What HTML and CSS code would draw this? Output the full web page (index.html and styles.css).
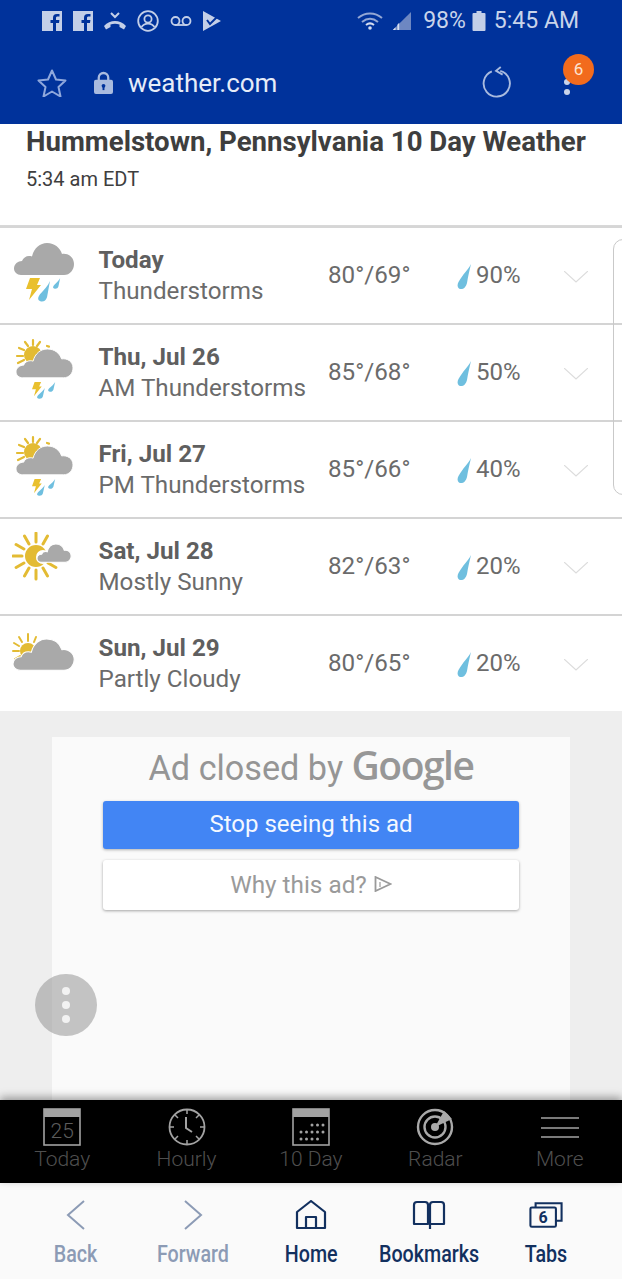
FILE: index.html
```html
<!DOCTYPE html>
<html lang="en">
<head>
<meta charset="utf-8">
<title>Hummelstown 10 Day Weather</title>
<link rel="stylesheet" href="styles.css">
</head>
<body>
<svg class="defs" width="0" height="0" aria-hidden="true">
  <defs>
    <path id="cloud" d="M7 32C3 32 0 29 0 25.500 0 21 4 18 8 18c1-3 4-5 7-5 1 0 2 0 3 .5C20 5 26 0 33 0c8 0 13 5 15 11 6-1 12 3 12 10 0 6-4 11-10 11z"/>
    <path id="bolt" d="M4 0h10l-3 7h4L3 22l3-11H0z"/>
    <path id="drop" d="M12 0C10 5 6 9 2 14-1 18 0 21 3 21.500 6 22 8 20 9 17 10 12 11 5 12 0z"/>
    <symbol id="i-storm" viewBox="0 0 64 66"><use href="#cloud" fill="#a9a9a9" x="2" y="2"/><use href="#bolt" fill="#e9c02e" x="14" y="37"/><use href="#drop" fill="#6fbfdf" transform="translate(26 40) scale(1 .95)"/><use href="#drop" fill="#6fbfdf" transform="translate(41 37) scale(.6 .5)"/></symbol>
    <symbol id="i-sunstorm" viewBox="0 0 64 66"><g stroke="#e3bb33" stroke-width="2.200" stroke-linecap="round"><path d="M21 2v5M13 4l3 4M28 4l-3 4M7 10l5 2M5 18h6M6 25l6-3M35 8l2 .6"/></g><circle cx="21" cy="17" r="9" fill="#e3bb33"/><use href="#cloud" fill="#a9a9a9" stroke="#fff" stroke-width="1" transform="translate(4 11) scale(.95 .9)"/><use href="#bolt" fill="#e9c02e" transform="translate(20 44) scale(.65)"/><use href="#drop" fill="#6fbfdf" transform="translate(25 50) scale(.65 .5)"/><use href="#drop" fill="#6fbfdf" transform="translate(36 44) scale(.6 .45)"/></symbol>
    <symbol id="i-sunny" viewBox="0 0 64 66"><g transform="translate(0 -1)"><g stroke="#e3bb33" stroke-width="3" stroke-linecap="round"><path d="M24 11V2M31 12.900l4.500-7.800M17 12.900l-4.500-7.800M11.900 18l-7.800-4.500M10 25H1M11.900 32l-7.800 4.500M17 37.100l-4.500 7.800M24 39v9M31 37.100l4.500 7.800M36.100 32l7.800 4.500"/></g><circle cx="24" cy="25" r="11" fill="#e3bb33"/><circle cx="31" cy="26" r="7" fill="#fff"/><use href="#cloud" fill="#a9a9a9" stroke="#fff" stroke-width="2" transform="translate(25 13) scale(.57)"/></g></symbol>
    <symbol id="i-partly" viewBox="0 0 64 66"><g transform="translate(0 -1)"><g stroke="#e3bb33" stroke-width="2" stroke-linecap="round"><path d="M16 6v7M7 9l3 5M24 9l-2 5M2 15l5 3M1 23h6M3 31l5-3"/></g><circle cx="16" cy="23" r="8" fill="#e3bb33"/><use href="#cloud" fill="#a9a9a9" stroke="#fff" stroke-width="1" transform="translate(1 11) scale(1.020 .98)"/></g></symbol>
    <symbol id="i-calendar" viewBox="0 0 38 38"><rect x="1" y="1" width="36" height="36" fill="none" stroke="#a2a2a2" stroke-width="1.600"/><rect x="1" y="1" width="36" height="8" fill="#a2a2a2"/></symbol>
    <symbol id="i-drop" viewBox="0 0 14 26"><path d="M14 0C11 6 6 10 1.500 18-1 23 2 25.500 5 25 8 24.500 9.500 21 10 19 11 13 12.500 6 14 0z" fill="#6fbfdf"/></symbol>
  </defs>
</svg>
<div class="phone">
  <header class="appbar">
    <div class="status">
      <div class="status-icons">
        <svg class="si" viewBox="0 0 20 20"><path fill="#c3cfe8" d="M0 0h20v20h-6v-8h3l.4-3H14V7c0-1 .5-1.500 1.700-1.500H17.500V3h-2.500C12 3 11 4.500 11 7v2H8.500v3H11v8H0z"/></svg>
        <svg class="si" viewBox="0 0 20 20"><path fill="#c3cfe8" d="M0 0h20v20h-6v-8h3l.4-3H14V7c0-1 .5-1.500 1.700-1.500H17.500V3h-2.500C12 3 11 4.500 11 7v2H8.500v3H11v8H0z"/></svg>
        <svg class="si call" viewBox="0 0 22 20"><path fill="none" stroke="#c3cfe8" stroke-width="2" d="M7 2l4 4 4-4"/><path fill="#c3cfe8" d="M0 15c3-3.500 7-5 11-5s8 1.500 11 5l-2 3.500-4.500-2.500v-2.500c-3-1-6-1-9 0V16L2 18.500z"/></svg>
        <svg class="si acct" viewBox="0 0 22 22"><g fill="none" stroke="#c3cfe8" stroke-width="1.800"><circle cx="11" cy="11" r="9.800"/><circle cx="11" cy="9" r="3.600"/><path d="M4.500 17c2-3 4-3.400 6.500-3.400s4.500.4 6.500 3.400"/></g></svg>
        <svg class="si vm" viewBox="0 0 22 12"><g fill="none" stroke="#c3cfe8" stroke-width="1.800"><circle cx="5.500" cy="6" r="4"/><circle cx="16.500" cy="6" r="4"/><path d="M5.500 10h11"/></g></svg>
        <svg class="si play" viewBox="0 0 18 20"><path fill="#c3cfe8" d="M0 0l18 10L0 20z"/><path fill="none" stroke="#00329b" stroke-width="2" d="M4 9l3 4 8-8"/></svg>
      </div>
      <div class="status-right">
        <svg class="wifi" viewBox="0 0 26 18"><g fill="none" stroke="#93a7d4" stroke-width="2"><path d="M1 6c7-6 17-6 24 0"/><path d="M5 10c5-4 11-4 16 0"/></g><path fill="none" stroke="#d5ddf0" stroke-width="2" d="M9 13c2.500-2 5.500-2 8 0"/><circle cx="13" cy="16" r="1.800" fill="#d5ddf0"/></svg>
        <svg class="signal" viewBox="0 0 22 20"><path fill="#6d87c2" d="M22 0v20H2z"/><path fill="#d5ddf0" d="M2 20l3-3v3zM7 20v-6l2-2v8z"/></svg>
        <span class="status-text pct">98%</span>
        <svg class="battery" viewBox="0 0 13 20"><path fill="#c3cfe8" d="M4 0h5v2h3a1 1 0 0 1 1 1v16a1 1 0 0 1-1 1H1a1 1 0 0 1-1-1V3a1 1 0 0 1 1-1h3z"/></svg>
        <span class="status-text">5:45 AM</span>
      </div>
    </div>
    <div class="toolbar">
      <svg class="star" viewBox="0 0 30 28"><path fill="none" stroke="#8fa8dc" stroke-width="2" stroke-linejoin="round" d="M15 1.500l4 9 9.500 1-7 6.500 2 9.500-8.500-5-8.500 5 2-9.500-7-6.500 9.500-1z"/></svg>
      <svg class="lock" viewBox="0 0 20 24"><path fill="none" stroke="#a9bbdf" stroke-width="2.400" d="M5 11V7a5 5 0 0 1 10 0v4"/><rect y="9" width="20" height="15" rx="2" fill="#a9bbdf"/><circle cx="10" cy="15.500" r="2" fill="#00329b"/><rect x="9" y="16" width="2" height="4" fill="#00329b"/></svg>
      <span class="url">weather.com</span>
      <svg class="reload" viewBox="0 0 32 32"><path fill="none" stroke="#a9bbdf" stroke-width="2" d="M10.500 3.500A14 14 0 1 0 19.500 3"/><path fill="none" stroke="#a9bbdf" stroke-width="2" d="M20 -1l-5 4 7 4"/></svg>
      <div class="menu-dots"><i></i><i></i></div>
      <span class="badge">6</span>
    </div>
  </header>

  <section class="heading">
    <h1>Hummelstown, Pennsylvania 10 Day Weather</h1>
    <p>5:34 am EDT</p>
  </section>

  <main class="forecast">
    <div class="day">
      <svg class="wx"><use href="#i-storm"/></svg>
      <div class="desc"><b>Today</b><span>Thunderstorms</span></div>
      <div class="temp">80°/69°</div>
      <div class="rain"><svg class="raindrop"><use href="#i-drop"/></svg>90%</div>
      <svg class="chev" viewBox="0 0 24 12"><path fill="none" stroke="#dcdcdc" stroke-width="1.200" d="M0 0l12 11L24 0"/></svg>
    </div>
    <div class="day">
      <svg class="wx"><use href="#i-sunstorm"/></svg>
      <div class="desc"><b>Thu, Jul 26</b><span>AM Thunderstorms</span></div>
      <div class="temp">85°/68°</div>
      <div class="rain"><svg class="raindrop"><use href="#i-drop"/></svg>50%</div>
      <svg class="chev" viewBox="0 0 24 12"><path fill="none" stroke="#dcdcdc" stroke-width="1.200" d="M0 0l12 11L24 0"/></svg>
    </div>
    <div class="day">
      <svg class="wx"><use href="#i-sunstorm"/></svg>
      <div class="desc"><b>Fri, Jul 27</b><span>PM Thunderstorms</span></div>
      <div class="temp">85°/66°</div>
      <div class="rain"><svg class="raindrop"><use href="#i-drop"/></svg>40%</div>
      <svg class="chev" viewBox="0 0 24 12"><path fill="none" stroke="#dcdcdc" stroke-width="1.200" d="M0 0l12 11L24 0"/></svg>
    </div>
    <div class="day">
      <svg class="wx"><use href="#i-sunny"/></svg>
      <div class="desc"><b>Sat, Jul 28</b><span>Mostly Sunny</span></div>
      <div class="temp">82°/63°</div>
      <div class="rain"><svg class="raindrop"><use href="#i-drop"/></svg>20%</div>
      <svg class="chev" viewBox="0 0 24 12"><path fill="none" stroke="#dcdcdc" stroke-width="1.200" d="M0 0l12 11L24 0"/></svg>
    </div>
    <div class="day last">
      <svg class="wx"><use href="#i-partly"/></svg>
      <div class="desc"><b>Sun, Jul 29</b><span>Partly Cloudy</span></div>
      <div class="temp">80°/65°</div>
      <div class="rain"><svg class="raindrop"><use href="#i-drop"/></svg>20%</div>
      <svg class="chev" viewBox="0 0 24 12"><path fill="none" stroke="#dcdcdc" stroke-width="1.200" d="M0 0l12 11L24 0"/></svg>
    </div>
    <div class="side-panel"></div>
  </main>

  <section class="ad-area">
    <div class="ad-card">
      <div class="ad-title">Ad closed by <span class="google">Google</span></div>
      <div class="ad-btn primary">Stop seeing this ad</div>
      <div class="ad-btn secondary">Why this ad?
        <svg class="adchoice" viewBox="0 0 18 16"><path fill="none" stroke="#9a9a9a" stroke-width="1.800" d="M1.500 1l15 7-15 7z"/><path stroke="#9a9a9a" stroke-width="1.200" d="M6 6v5"/></svg>
      </div>
    </div>
    <div class="fab"><i></i><i></i><i></i></div>
  </section>

  <nav class="tabs">
    <div class="tab">
      <div class="tab-icon"><svg class="ti"><use href="#i-calendar"/></svg><span class="cal-num">25</span></div>
      <span>Today</span>
    </div>
    <div class="tab">
      <div class="tab-icon"><svg class="ti" viewBox="0 0 38 38"><g fill="none" stroke="#a2a2a2"><circle cx="19" cy="19" r="17.500" stroke-width="1.800"/><path stroke-width="1.500" d="M19 2v4M19 32v4M2 19h4M32 19h4M7 7l3 3M28 28l3 3M31 7l-3 3M10 28l-3 3"/><path stroke-width="2" d="M18 9v11l6 4"/></g></svg></div>
      <span>Hourly</span>
    </div>
    <div class="tab">
      <div class="tab-icon"><svg class="ti" viewBox="0 0 38 38"><use href="#i-calendar" width="38" height="38"/><g fill="#a2a2a2"><circle cx="20" cy="17" r="1.500"/><circle cx="25.500" cy="17" r="1.500"/><circle cx="31" cy="17" r="1.500"/><circle cx="9" cy="24" r="1.500"/><circle cx="14.500" cy="24" r="1.500"/><circle cx="20" cy="24" r="1.500"/><circle cx="25.500" cy="24" r="1.500"/><circle cx="31" cy="24" r="1.500"/><circle cx="9" cy="31" r="1.500"/><circle cx="14.500" cy="31" r="1.500"/><circle cx="20" cy="31" r="1.500"/><circle cx="25.500" cy="31" r="1.500"/></g></svg></div>
      <span>10 Day</span>
    </div>
    <div class="tab">
      <div class="tab-icon"><svg class="ti" viewBox="0 0 38 38"><g fill="none" stroke="#a9a9a9"><circle cx="19" cy="19" r="17" stroke-width="2.400"/><circle cx="19" cy="19" r="10.500" stroke-width="2.400"/></g><circle cx="19" cy="19" r="4" fill="#a9a9a9"/><path d="M19 19L28 3l8 8z" fill="#a9a9a9"/></svg></div>
      <span>Radar</span>
    </div>
    <div class="tab">
      <div class="tab-icon"><svg class="ti" viewBox="0 0 38 38"><path stroke="#a2a2a2" stroke-width="1.600" d="M0 10h38M0 20h38M0 29h38"/></svg></div>
      <span>More</span>
    </div>
  </nav>

  <nav class="browser-nav">
    <div class="nav-item off">
      <svg class="ni" viewBox="0 0 34 30"><path fill="none" stroke="#8c9bb5" stroke-width="2" d="M25 1L9 15l16 14"/></svg>
      <span>Back</span>
    </div>
    <div class="nav-item off">
      <svg class="ni" viewBox="0 0 34 30"><path fill="none" stroke="#8c9bb5" stroke-width="2" d="M9 1l16 14L9 29"/></svg>
      <span>Forward</span>
    </div>
    <div class="nav-item">
      <svg class="ni" viewBox="0 0 34 30"><path fill="none" stroke="#12305f" stroke-width="2.200" stroke-linejoin="round" d="M3 28V12L17 1l14 11v16zM12 28V17h10v11"/></svg>
      <span>Home</span>
    </div>
    <div class="nav-item">
      <svg class="ni" viewBox="0 0 34 30"><path fill="none" stroke="#12305f" stroke-width="2.200" stroke-linejoin="round" d="M16 24H2V5a3 3 0 0 1 3-3h8a3 3 0 0 1 3 3zM18 29V5a3 3 0 0 1 3-3h8a3 3 0 0 1 3 3v19H18"/></svg>
      <span>Bookmarks</span>
    </div>
    <div class="nav-item">
      <svg class="ni" viewBox="0 0 36 30"><g fill="none" stroke="#12305f" stroke-width="2.200"><rect x="1.500" y="7" width="27" height="20.500" rx="1.500"/><path d="M7 7V2.500h27.500V21H28.500"/></g><text x="15" y="24" class="tabcount">6</text></svg>
      <span>Tabs</span>
    </div>
  </nav>
</div>
</body>
</html>
```

FILE: styles.css
```css
* { box-sizing: border-box; }
html, body { margin: 0; padding: 0; }
body { font-family: Roboto, "Liberation Sans", sans-serif; background: #fff; }
.defs { position: absolute; }

.phone {
  width: 622px;
  height: 1279px;
  display: flex;
  flex-direction: column;
  overflow: hidden;
  position: relative;
}

/* header */
.appbar { background: #00329b; height: 124px; flex: none; }
.status { height: 41px; display: flex; justify-content: space-between; align-items: center; padding: 0 43px 0 42px; }
.status-icons { display: flex; align-items: center; gap: 11px; }
.si { width: 20px; height: 20px; display: block; }
.si.call { width: 22px; }
.si.acct { width: 22px; height: 22px; }
.si.vm { width: 22px; height: 12px; }
.si.play { width: 18px; }
.status-right { display: flex; align-items: center; }
.wifi { width: 26px; height: 18px; margin-right: 8px; }
.signal { width: 20px; height: 20px; margin-right: 12px; }
.status-text { font-size: 23px; color: #c9d4ea; line-height: 1; }
.pct { margin-right: 6px; }
.battery { width: 14px; height: 20px; margin-right: 8px; }

.toolbar { position: relative; height: 83px; display: flex; align-items: center; padding: 0 0 0 37px; }
.star { width: 30px; height: 28px; margin-right: 27px; }
.lock { width: 19px; height: 23px; margin-right: 15px; }
.url { font-size: 26px; color: #e6ecf8; }
.reload { width: 30px; height: 30px; margin-left: 205px; overflow: visible; }
.menu-dots { display: flex; flex-direction: column; gap: 4px; margin-left: 52px; margin-top: 8px; }
.menu-dots i { display: block; width: 6px; height: 6px; border-radius: 50%; background: #c9d4ea; }
.badge {
  position: absolute; left: 563px; top: 13px;
  width: 31px; height: 31px; border-radius: 50%;
  background: #f26b1d; color: #fde3d2;
  font-size: 17px; line-height: 31px; text-align: center;
}

/* heading */
.heading { height: 102px; flex: none; padding: 0 0 0 26px; border-bottom: 1px solid #d8d8d8; }
.heading h1 { margin: 0; padding-top: 1px; font-size: 27.6px; line-height: 34px; font-weight: 700; color: #3e3e3e; white-space: nowrap; }
.heading p { margin: 7px 0 0; font-size: 20px; line-height: 26px; color: #3e3e3e; }

/* forecast */
.forecast { flex: none; position: relative; border-top: 2px solid #d6d6d6; background: #fff; }
.day {
  height: 97px;
  display: grid;
  grid-template-columns: 12px 87px 229px 129px 1fr 24px 34px;
  align-items: center;
  border-bottom: 2px solid #d4d4d4;
  color: #666;
}
.day.last { border-bottom: 0; height: 95px; }
.wx { grid-column: 2; width: 64px; height: 66px; align-self: start; margin-top: 13px; }
.desc { grid-column: 3; display: flex; flex-direction: column; margin-left: -.5px; margin-top: 1px; }
.desc b { font-size: 24.2px; line-height: 31px; font-weight: 700; color: #5f5f5f; }
.desc span { font-size: 24.2px; line-height: 31px; color: #6b6b6b; white-space: nowrap; }
.temp { grid-column: 4; font-size: 24.2px; color: #6b6b6b; margin-top: -2px; }
.rain { grid-column: 5; display: flex; align-items: center; gap: 5px; font-size: 24px; color: #6b6b6b; margin-top: -2px; }
.raindrop { width: 14px; height: 26px; margin-top: 4px; }
.chev { grid-column: 6; width: 24px; height: 12px; margin-top: 3px; }
.side-panel {
  position: absolute; left: 613px; top: 11px;
  width: 20px; height: 256px;
  border: 1.500px solid #c9c9c9; border-radius: 10px;
}

/* ad */
.ad-area { flex: 1; background: #eeeeee; padding: 26px 52px 0; position: relative; min-height: 0; }
.ad-card { background: #fafafa; height: 100%; display: flex; flex-direction: column; align-items: center; padding: 0 51px; }
.ad-title { flex: none; height: 62px; font-size: 34.2px; line-height: 62px; color: #959595; white-space: nowrap; }
.google { font-family: "Open Sans", sans-serif; font-size: 39px; line-height: 0; font-weight: 600; letter-spacing: -1.500px; color: #979797; }
.ad-btn { width: 100%; flex: none; display: flex; align-items: center; justify-content: center; border-radius: 3px; }
.primary { margin-top: 2px; height: 48px; background: #4285f4; color: #f4f8ff; font-size: 24px; padding-bottom: 2px; box-shadow: 0 1px 3px rgba(0,0,0,.3); }
.secondary { margin-top: 11px; height: 50px; background: #fff; color: #9a9a9a; font-size: 24.3px; gap: 7px; padding-bottom: 2px; box-shadow: 0 1px 3px rgba(0,0,0,.35); }
.adchoice { width: 18px; height: 16px; }
.fab {
  position: absolute; left: 35px; top: 263px;
  width: 62px; height: 62px; border-radius: 50%;
  background: rgba(140,140,140,.5);
  display: flex; flex-direction: column; align-items: center; justify-content: center; gap: 6px;
}
.fab i { display: block; width: 8px; height: 8px; border-radius: 50%; background: #f2f2f2; }

/* tabs */
.tabs {
  flex: none; height: 83px; background: #000;
  display: grid; grid-template-columns: repeat(5, minmax(0, 1fr));
  box-shadow: 0 -3px 8px rgba(0,0,0,.35);
  position: relative;
}
.tab { display: flex; flex-direction: column; align-items: center; padding-top: 8px; }
.tab span { font-size: 21px; font-weight: 300; line-height: 28px; color: #4f4f4f; margin-top: -1px; }
.tab-icon { position: relative; width: 38px; height: 38px; }
.ti { width: 38px; height: 38px; display: block; }
.tab-icon .cal-num { position: absolute; left: 0; right: 0; top: 10px; margin: 0; text-align: center; font-size: 21px; line-height: 26px; color: #5c5c5c; }

/* browser nav */
.browser-nav {
  flex: none; height: 96px; background: #fafafa;
  display: grid; grid-template-columns: repeat(5, minmax(0, 1fr));
  padding: 0 17px;
}
.nav-item { display: flex; flex-direction: column; align-items: center; padding-top: 17px; color: #12305f; }
.nav-item.off { color: #8c9bb5; }
.ni { width: 34px; height: 30px; display: block; }
.nav-item span { font-size: 24px; font-weight: 500; line-height: 28px; margin-top: 10px; white-space: nowrap; transform: scaleX(.82); }
.tabcount { font-size: 17px; font-weight: 700; fill: #12305f; text-anchor: middle; font-family: Roboto, sans-serif; }
```
